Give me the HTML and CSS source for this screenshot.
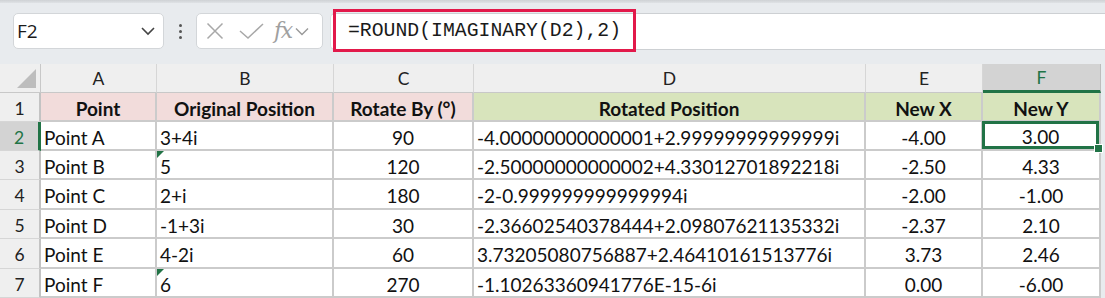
FILE: index.html
```html
<!DOCTYPE html>
<html>
<head>
<meta charset="utf-8">
<link rel="stylesheet" href="styles.css">
</head>
<body>
<div class="app">
  <div class="topstrip"></div>
  <div class="toolbar">
    <div class="namebox">
      <span class="nb-text">F2</span>
      <svg class="nb-chev" width="16" height="10" viewBox="0 0 16 10"><path d="M2 2 L8 8 L14 2" fill="none" stroke="#444" stroke-width="1.6"/></svg>
    </div>
    <div class="dots"><span></span><span></span><span></span></div>
    <div class="fxbox">
      <svg width="18" height="18" viewBox="0 0 18 18"><path d="M1.5 1.5 L16.5 16.5 M16.5 1.5 L1.5 16.5" stroke="#a8a8a8" stroke-width="1.5" fill="none"/></svg>
      <svg width="26" height="16" viewBox="0 0 26 16"><path d="M1 8 L9 15 L24 1" stroke="#a8a8a8" stroke-width="1.5" fill="none"/></svg>
      <span class="fx">fx</span>
      <svg width="14" height="9" viewBox="0 0 14 9"><path d="M1 1.5 L7 7.5 L13 1.5" fill="none" stroke="#999" stroke-width="1.4"/></svg>
    </div>
    <div class="formula">
      <span class="ftext">=ROUND(IMAGINARY(D2),2)</span>
    </div>
    <div class="highlight"></div>
  </div>
  <div class="sheet">
    <div class="ch corner"><svg width="22" height="22" viewBox="0 0 22 22"><polygon points="21,2 21,21 2,21" fill="#bdbdbd"/></svg></div>
    <div class="ch">A</div>
    <div class="ch">B</div>
    <div class="ch">C</div>
    <div class="ch">D</div>
    <div class="ch">E</div>
    <div class="ch sel">F</div>

    <div class="rh">1</div>
    <div class="c pink b ctr">Point</div>
    <div class="c pink b ctr">Original Position</div>
    <div class="c pink b ctr">Rotate By (°)</div>
    <div class="c green b ctr">Rotated Position</div>
    <div class="c green b ctr">New X</div>
    <div class="c green b ctr">New Y</div>

    <div class="rh sel">2</div>
    <div class="c">Point A</div>
    <div class="c">3+4i</div>
    <div class="c ctr">90</div>
    <div class="c">-4.00000000000001+2.99999999999999i</div>
    <div class="c ctr">-4.00</div>
    <div class="c ctr active">3.00<span class="handle"></span></div>

    <div class="rh">3</div>
    <div class="c">Point B</div>
    <div class="c"><span class="tri"></span>5</div>
    <div class="c ctr">120</div>
    <div class="c">-2.50000000000002+4.33012701892218i</div>
    <div class="c ctr">-2.50</div>
    <div class="c ctr">4.33</div>

    <div class="rh">4</div>
    <div class="c">Point C</div>
    <div class="c">2+i</div>
    <div class="c ctr">180</div>
    <div class="c">-2-0.999999999999994i</div>
    <div class="c ctr">-2.00</div>
    <div class="c ctr">-1.00</div>

    <div class="rh">5</div>
    <div class="c">Point D</div>
    <div class="c">-1+3i</div>
    <div class="c ctr">30</div>
    <div class="c">-2.36602540378444+2.09807621135332i</div>
    <div class="c ctr">-2.37</div>
    <div class="c ctr">2.10</div>

    <div class="rh">6</div>
    <div class="c">Point E</div>
    <div class="c">4-2i</div>
    <div class="c ctr">60</div>
    <div class="c">3.73205080756887+2.46410161513776i</div>
    <div class="c ctr">3.73</div>
    <div class="c ctr">2.46</div>

    <div class="rh">7</div>
    <div class="c">Point F</div>
    <div class="c"><span class="tri"></span>6</div>
    <div class="c ctr">270</div>
    <div class="c">-1.10263360941776E-15-6i</div>
    <div class="c ctr">0.00</div>
    <div class="c ctr">-6.00</div>
  </div>
</div>
</body>
</html>
```

FILE: styles.css
```css
html, body {
  margin: 0;
  padding: 0;
  background: #e8ebee;
  overflow: hidden;
}
.app {
  width: 1105px;
  height: 298px;
  position: relative;
  background: #e8ebee;
}
.topstrip {
  height: 3px;
  background: linear-gradient(#cfd2d5, #dfe2e5);
}
.toolbar {
  position: relative;
  display: flex;
  align-items: center;
  height: 38px;
  margin-top: 9px;
  padding-left: 13px;
}
.namebox {
  box-sizing: border-box;
  width: 151px;
  height: 36px;
  background: #fff;
  border: 1px solid #d3d6d9;
  border-radius: 5px;
  display: flex;
  align-items: center;
  justify-content: space-between;
  padding: 0 7px 0 3px;
}
.nb-text {
  font-family: "Open Sans", "Noto Sans", sans-serif;
  font-size: 19px;
  color: #1a1a1a;
}
.dots {
  width: 32px;
  display: flex;
  flex-direction: column;
  align-items: center;
  gap: 3px;
}
.dots span {
  width: 3px;
  height: 3px;
  border-radius: 50%;
  background: #555;
}
.fxbox {
  box-sizing: border-box;
  width: 127px;
  height: 36px;
  background: #fff;
  border: 1px solid #d3d6d9;
  border-radius: 5px;
  display: flex;
  align-items: center;
  padding-left: 9px;
}
.fxbox svg:nth-child(1) { margin-right: 15px; }
.fxbox svg:nth-child(2) { margin-right: 9px; }
.fx {
  font-family: "DejaVu Serif", "Liberation Serif", serif;
  font-style: italic;
  font-size: 22px;
  color: #a0a0a0;
  margin-right: 3px;
  letter-spacing: -1.5px;
  line-height: 1;
}
.formula {
  flex: 1;
  margin-left: 7px;
  height: 37px;
  box-sizing: border-box;
  background: #fff;
  border-top: 1px solid #cdd0d3;
  border-bottom: 1px solid #cdd0d3;
  border-left: 1px solid #dcdfe2;
  border-radius: 5px 0 0 5px;
  display: flex;
  align-items: center;
  padding-left: 17px;
}
.ftext {
  font-family: "Liberation Mono", "DejaVu Sans Mono", monospace;
  font-size: 19.8px;
  color: #1a1a1a;
}
.highlight {
  position: absolute;
  left: 333px;
  top: -3px;
  width: 303px;
  height: 43px;
  box-sizing: border-box;
  border: 3px solid #e2194a;
}
.sheet {
  margin-top: 14px;
  display: grid;
  grid-template-columns: 41px 116px 177px 140px 392px 117px 118px;
  grid-template-rows: 29px 29px 29px 29px 30px 29px 30px 29px;
  font-family: "Lato", "Open Sans", sans-serif;
  font-size: 19px;
  color: #111;
}
.sheet > div {
  box-sizing: border-box;
  position: relative;
}
.ch {
  background: #efefef;
  border-right: 1px solid #d6d6d6;
  border-bottom: 1px solid #c8c8c8;
  display: flex;
  align-items: center;
  justify-content: center;
  font-size: 17.5px;
  color: #222;
  padding-top: 1px;
}
.ch.corner {
  align-items: flex-end;
  justify-content: flex-end;
  padding: 0 3px 3px 0;
  border-right: 1px solid #c8c8c8;
}
.ch.corner svg { display: block; }
.ch.sel {
  background: #d3d3d3;
  color: #217346;
  border-bottom: 3px solid #217346;
  border-right: 1px solid #bdbdbd;
}
.rh {
  background: #efefef;
  border-right: 2px solid #c3c3c3;
  border-bottom: 1px solid #d6d6d6;
  display: flex;
  align-items: center;
  justify-content: center;
  font-size: 17.5px;
  color: #222;
  padding-top: 2px;
}
.rh.sel {
  background: #d3d3d3;
  color: #217346;
  border-right: 3px solid #217346;
}
.c {
  background: #fff;
  border-right: 2px solid #cbcbcb;
  border-bottom: 2px solid #cbcbcb;
  display: flex;
  align-items: center;
  padding: 3px 3px 0 3px;
  white-space: nowrap;
  overflow: hidden;
}
.c.ctr { justify-content: center; }
.c.b { font-weight: bold; }
.c.pink { background: #f2dcdb; }
.c.green { background: #d8e4bc; }
.c.active {
  overflow: visible;
  box-shadow: inset 0 0 0 3px #217346;
  margin: -1px 0 0 -1px;
}
.handle {
  position: absolute;
  right: -4px;
  bottom: -4px;
  width: 7px;
  height: 7px;
  background: #217346;
  border: 1px solid #fff;
  z-index: 2;
}
.tri {
  position: absolute;
  left: 0;
  top: 0;
  width: 0;
  height: 0;
  border-top: 7px solid #217346;
  border-right: 7px solid transparent;
}
```
